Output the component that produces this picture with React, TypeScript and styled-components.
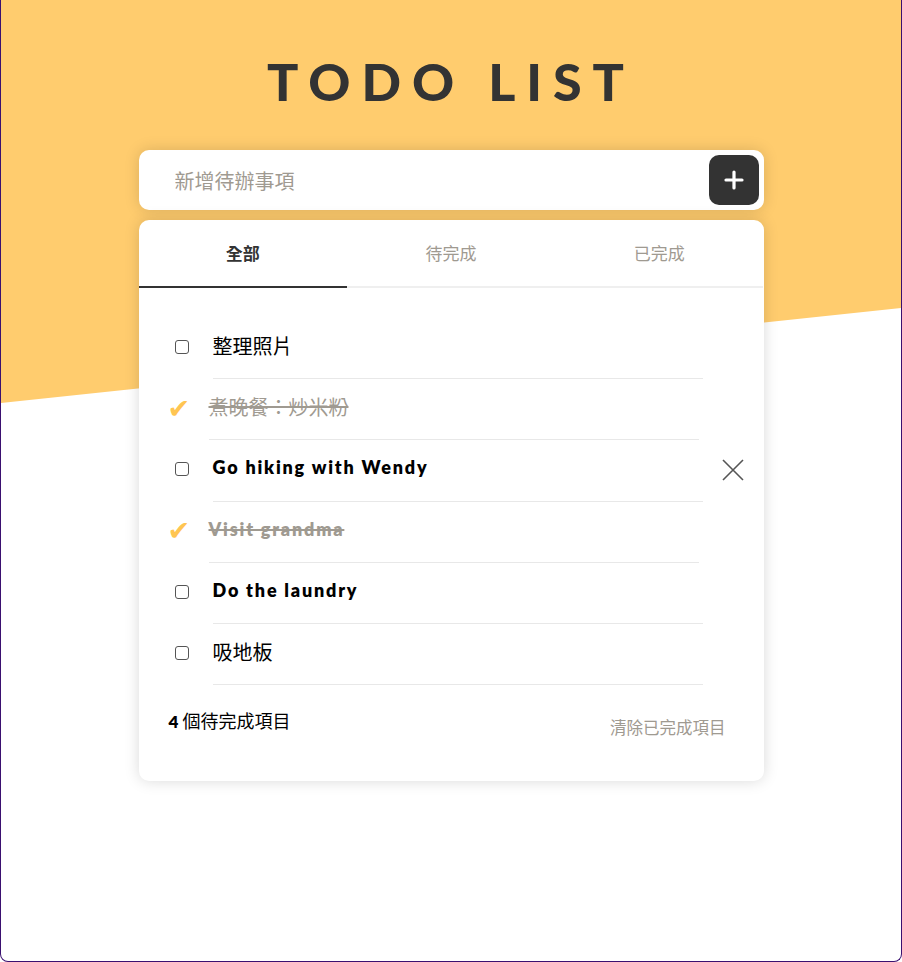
import React from "react";
import styled, { createGlobalStyle } from "styled-components";

const GlobalStyle = createGlobalStyle`
  body {
    margin: 0;
    font-family: "Lato", "Noto Sans CJK TC", sans-serif;
    color: #333;
  }
  * { box-sizing: border-box; }
`;

type Todo = { id: number; text: string; done: boolean };

const TODOS: Todo[] = [
  { id: 1, text: "整理照片", done: false },
  { id: 2, text: "煮晚餐：炒米粉", done: true },
  { id: 3, text: "Go hiking with Wendy", done: false },
  { id: 4, text: "Visit grandma", done: true },
  { id: 5, text: "Do the laundry", done: false },
  { id: 6, text: "吸地板", done: false },
];

const TABS = ["全部", "待完成", "已完成"];

// latin runs are heavier than the CJK fallback in the original font
const splitRuns = (text: string) =>
  text.split(/([A-Za-z0-9][A-Za-z0-9 ]*)/).filter(Boolean);

const isLatin = (run: string) => /^[A-Za-z0-9 ]+$/.test(run);

export default function App() {
  const pending = TODOS.filter((t) => !t.done).length;

  return (
    <>
      <GlobalStyle />
      <Frame>
        <Container>
          <Title>TODO LIST</Title>
          <InputBar>
            <Input placeholder="新增待辦事項" />
            <AddButton aria-label="add">
              <svg width="20" height="20" viewBox="0 0 20 20">
                <path
                  d="M10 2v16M2 10h16"
                  stroke="#fff"
                  strokeWidth="3.2"
                  strokeLinecap="round"
                />
              </svg>
            </AddButton>
          </InputBar>

          <Panel>
            <Tabs>
              {TABS.map((tab, i) => (
                <Tab key={tab} $active={i === 0}>
                  {tab}
                </Tab>
              ))}
            </Tabs>

            <List>
              {TODOS.map((todo) => (
                <Item key={todo.id}>
                  <CheckCol>
                    {todo.done ? <Checkmark>✔</Checkmark> : <Box />}
                  </CheckCol>
                  <Content $done={todo.done}>
                    {splitRuns(todo.text).map((run, i) =>
                      isLatin(run) ? <Latin key={i}>{run}</Latin> : run
                    )}
                  </Content>
                  <DeleteCol>
                    {todo.id === 3 && (
                      <svg width="22" height="22" viewBox="0 0 22 22">
                        <path
                          d="M1 1L21 21M21 1L1 21"
                          stroke="#555"
                          strokeWidth="1.6"
                        />
                      </svg>
                    )}
                  </DeleteCol>
                </Item>
              ))}
            </List>

            <Footer>
              <Count>
                <Latin>{pending}</Latin> 個待完成項目
              </Count>
              <ClearButton>清除已完成項目</ClearButton>
            </Footer>
          </Panel>
        </Container>
      </Frame>
    </>
  );
}

const Frame = styled.div`
  position: relative;
  width: 902px;
  height: 962px;
  background: #fff;
  border: 1px solid #3a1070;
  border-top: none;
  border-radius: 0 0 8px 8px;
  overflow: hidden;

  &::before {
    content: "";
    position: absolute;
    left: 0;
    top: 0;
    right: 0;
    height: 403px;
    background: #ffcc6e;
    clip-path: polygon(0 0, 100% 0, 100% 308px, 0 403px);
  }
`;

const Container = styled.div`
  position: relative;
  width: 625px;
  margin: 0 auto;
  padding-top: 50px;
`;

const Title = styled.h1`
  margin: 0 0 38px;
  text-align: center;
  font-size: 52px;
  line-height: 62px;
  font-weight: 900;
  letter-spacing: 0.21em;
  color: #333;
`;

const InputBar = styled.div`
  display: flex;
  align-items: center;
  height: 60px;
  padding: 0 5px 0 34px;
  background: #fff;
  border-radius: 10px;
  box-shadow: 0 0 15px rgba(0, 0, 0, 0.15);
`;

const Input = styled.input`
  flex: 1;
  border: none;
  outline: none;
  background: transparent;
  font-family: "Noto Sans CJK TC", sans-serif;
  font-size: 20px;
  color: #333;

  &::placeholder {
    color: #9f9a91;
  }
`;

const AddButton = styled.button`
  display: flex;
  align-items: center;
  justify-content: center;
  width: 50px;
  height: 50px;
  padding: 0;
  border: none;
  border-radius: 10px;
  background: #333;
`;

const Panel = styled.div`
  margin-top: 10px;
  background: #fff;
  border-radius: 10px;
  box-shadow: 0 0 15px rgba(0, 0, 0, 0.15);
  overflow: hidden;
`;

const Tabs = styled.div`
  display: flex;
`;

const Tab = styled.div<{ $active: boolean }>`
  flex: 1;
  height: 68px;
  padding-bottom: 2px;
  display: flex;
  align-items: center;
  justify-content: center;
  font-family: "Noto Sans CJK TC", sans-serif;
  font-size: 17px;
  font-weight: ${({ $active }) => ($active ? 700 : 400)};
  color: ${({ $active }) => ($active ? "#333" : "#9f9a91")};
  border-bottom: 2px solid ${({ $active }) => ($active ? "#333" : "#efefef")};
`;

const List = styled.ul`
  list-style: none;
  margin: 0;
  padding: 30px 0 0 32px;
`;

const Item = styled.li`
  display: flex;
  align-items: stretch;
  height: 61.2px;
`;

const CheckCol = styled.div`
  width: 42px;
  padding-bottom: 3px;
  display: flex;
  align-items: center;
`;

const Box = styled.span`
  display: block;
  width: 14px;
  height: 14px;
  margin-left: 4px;
  border: 1.5px solid #555;
  border-radius: 3px;
`;

const Checkmark = styled.span`
  font-family: "DejaVu Sans", sans-serif;
  font-size: 27px;
  line-height: 1;
  color: #ffc552;
  margin-left: -3px;
`;

const Content = styled.div<{ $done: boolean }>`
  width: 490px;
  padding-bottom: 6px;
  display: flex;
  align-items: center;
  white-space: pre;
  margin-left: ${({ $done }) => ($done ? "-4px" : "0")};
  margin-right: ${({ $done }) => ($done ? "4px" : "0")};
  border-bottom: 1px solid #e8e8e8;
  font-family: "Noto Sans CJK TC", sans-serif;
  font-size: 20px;
  color: ${({ $done }) => ($done ? "#9f9a91" : "#000")};
  text-decoration: ${({ $done }) => ($done ? "line-through" : "none")};
  text-decoration-thickness: 2px;
`;

const Latin = styled.span`
  font-family: "Lato", sans-serif;
  font-weight: 800;
  font-size: 18px;
  letter-spacing: 0.1em;
`;

const DeleteCol = styled.div`
  flex: 1;
  padding-bottom: 2px;
  display: flex;
  align-items: center;
  justify-content: center;
`;

const Footer = styled.div`
  display: flex;
  justify-content: space-between;
  align-items: flex-start;
  padding: 23px 38px 42px 30px;
`;

const Count = styled.div`
  font-family: "Noto Sans CJK TC", sans-serif;
  font-size: 18px;
  line-height: 24px;
  color: #000;

  ${Latin} {
    font-size: 17px;
    letter-spacing: 0;
  }
`;

const ClearButton = styled.button`
  margin-top: 7px;
  padding: 0;
  border: none;
  background: none;
  font-family: "Noto Sans CJK TC", sans-serif;
  font-size: 16.5px;
  line-height: 24px;
  color: #9f9a91;
`;
